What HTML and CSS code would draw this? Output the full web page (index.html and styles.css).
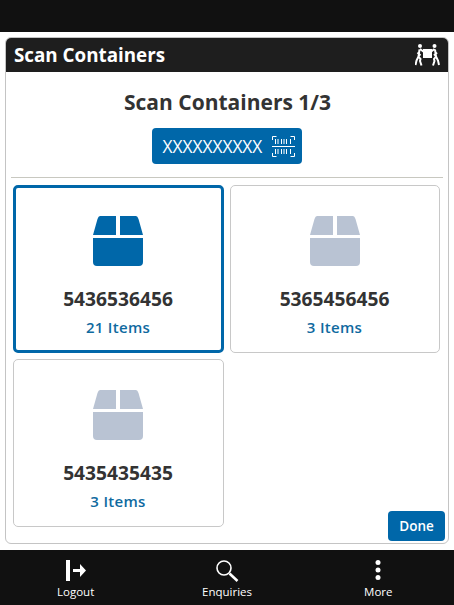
FILE: index.html
```html
<!DOCTYPE html>
<html lang="en">
<head>
  <meta charset="UTF-8">
  <meta name="viewport" content="width=device-width, initial-scale=1.0">
  <title>Scan Containers</title>
  <link rel="stylesheet" href="styles.css">
</head>
<body>
  <div class="status-bar"></div>
  <main class="panel">
    <header class="panel-header">
      <h1>Scan Containers</h1>
      <svg class="movers" width="25" height="22" viewBox="0 0 25 22" fill="#fff" stroke="#fff">
        <circle cx="5" cy="2" r="2" stroke="none"/>
        <circle cx="19.500" cy="2" r="2" stroke="none"/>
        <rect x="8" y="5" width="9" height="9" stroke="none"/>
        <path d="M5 5l4 3M4.500 5.500l-1 7 2 2.500-.5 2 1.500 4.500M3.500 12.500l-2 4-1 4.500M2.500 8.500l3 3" fill="none" stroke-width="2"/>
        <path d="M19.500 5l-4 3M20 5.500l1 7-2 2.500.5 2-1.500 4.500M21 12.500l2 4 1 4.500M22 8.500l-3 3" fill="none" stroke-width="2"/>
      </svg>
    </header>
    <div class="panel-body">
      <h2>Scan Containers 1/3</h2>
      <button class="scan-button" type="button">
        <span>XXXXXXXXXX</span>
        <svg width="23" height="23" viewBox="0 0 23 23" fill="none" stroke="#fff">
          <path d="M.5 5V1.500h4M18.500 1.500h4V5M.5 18v3.500h4M18.500 21.500h4V18"/>
          <path d="M0 11.500h23"/>
          <path d="M3.500 4v5M6 4v5M9.500 4v5M12 4v5M14.500 4v5M18.500 4v5M3.500 14v5M6 14v5M9.500 14v5M12 14v5M14.500 14v5M18.500 14v5"/>
        </svg>
      </button>
      <hr class="divider">
      <div class="tiles">
        <div class="tile selected">
          <svg class="box" width="50" height="50" viewBox="0 0 50 50"><path d="M7 0h16v19H0l4.500-16q1-3 2.500-3zM27 0h16q1.500 0 2.500 3L50 19H27zM0 22h50v24q0 4-4 4H4q-4 0-4-4z"/></svg>
          <div class="tile-number">5436536456</div>
          <div class="tile-items">21 Items</div>
        </div>
        <div class="tile">
          <svg class="box" width="50" height="50" viewBox="0 0 50 50"><path d="M7 0h16v19H0l4.500-16q1-3 2.500-3zM27 0h16q1.500 0 2.500 3L50 19H27zM0 22h50v24q0 4-4 4H4q-4 0-4-4z"/></svg>
          <div class="tile-number">5365456456</div>
          <div class="tile-items">3 Items</div>
        </div>
        <div class="tile">
          <svg class="box" width="50" height="50" viewBox="0 0 50 50"><path d="M7 0h16v19H0l4.500-16q1-3 2.500-3zM27 0h16q1.500 0 2.500 3L50 19H27zM0 22h50v24q0 4-4 4H4q-4 0-4-4z"/></svg>
          <div class="tile-number">5435435435</div>
          <div class="tile-items">3 Items</div>
        </div>
      </div>
      <div class="actions">
        <button class="done-button" type="button">Done</button>
      </div>
    </div>
  </main>
  <nav class="bottom-bar">
    <div class="nav-item">
      <svg width="24" height="22" viewBox="0 0 24 22" fill="#fff">
        <rect x="2" y="0" width="4" height="21"/>
        <path d="M9 9h7V4l6 6.500-6 6.500v-5H9z"/>
      </svg>
      <span>Logout</span>
    </div>
    <div class="nav-item">
      <svg width="24" height="22" viewBox="0 0 24 22" fill="none" stroke="#fff">
        <circle cx="9" cy="8" r="7" stroke-width="1.600"/>
        <path d="M14.500 13.500l8 7.500" stroke-width="2.600"/>
      </svg>
      <span>Enquiries</span>
    </div>
    <div class="nav-item">
      <svg width="24" height="22" viewBox="0 0 24 22" fill="#fff">
        <circle cx="12" cy="2.500" r="2.500"/>
        <circle cx="12" cy="10" r="2.500"/>
        <circle cx="12" cy="17.500" r="2.500"/>
      </svg>
      <span>More</span>
    </div>
  </nav>
</body>
</html>
```

FILE: styles.css
```css
* {
  box-sizing: border-box;
}

html, body {
  margin: 0;
  height: 605px;
  overflow: hidden;
}

body {
  display: flex;
  flex-direction: column;
  background-color: #fff;
  font-family: "Open Sans", "Noto Sans", sans-serif;
  color: #333;
}

.status-bar {
  height: 32px;
  flex: none;
  background-color: #111;
}

.panel {
  height: 507px;
  flex: none;
  margin: 5px 5px 6px 5px;
  border: 1px solid #c4c4c4;
  border-radius: 6px;
  overflow: hidden;
  display: flex;
  flex-direction: column;
}

.panel-header {
  height: 34px;
  flex: none;
  padding: 0 8px 0 8px;
  display: flex;
  align-items: center;
  justify-content: space-between;
  background-color: #1e1e1e;
}

.panel-header h1 {
  margin: 0;
  font-size: 18.8px;
  font-weight: 700;
  color: #fff;
}

.panel-body {
  flex: 1;
  padding: 0 4px 3px 7px;
  display: flex;
  flex-direction: column;
}

.panel-body h2 {
  margin: 17px 0 12px;
  height: 27px;
  line-height: 27px;
  font-size: 21px;
  font-weight: 700;
  text-align: center;
  padding-right: 2px;
}

.scan-button {
  align-self: center;
  width: 150px;
  height: 36px;
  margin-left: -4px;
  padding: 0 7px 0 11px;
  display: flex;
  align-items: center;
  justify-content: space-between;
  border: 0;
  border-radius: 4px;
  background-color: #0067a9;
  color: #fff;
  font-family: inherit;
  font-size: 17.3px;
}

.divider {
  width: 432px;
  margin: 13px 0 7px -2px;
  border: 0;
  border-top: 1px solid #c8c8c0;
}

.tiles {
  display: grid;
  grid-template-columns: 211px 210px;
  grid-auto-rows: 168px;
  gap: 6px;
}

.tile {
  padding-top: 30px;
  padding-right: 1px;
  display: flex;
  flex-direction: column;
  align-items: center;
  border: 1px solid #c8c8c8;
  border-radius: 5px;
}

.tile.selected {
  border: 3px solid #0067a9;
  padding-top: 28px;
}

.box {
  fill: #b9c3d3;
}

.selected .box {
  fill: #0067a9;
}

.tile-number {
  margin-top: 20px;
  font-size: 19.2px;
  font-weight: 700;
  line-height: 26px;
}

.tile-items {
  margin-top: 5px;
  font-size: 15px;
  font-weight: 600;
  line-height: 20px;
  letter-spacing: 0.3px;
  color: #0f6a9f;
}

.actions {
  position: absolute;
  top: 511px;
  left: 388px;
}

.done-button {
  width: 57px;
  height: 30px;
  padding: 0;
  border: 0;
  border-radius: 4px;
  background-color: #0067a9;
  color: #fff;
  font-family: inherit;
  font-size: 13.5px;
  font-weight: 600;
}

.bottom-bar {
  height: 55px;
  flex: none;
  padding: 10px 0 0;
  display: grid;
  grid-template-columns: repeat(3, 1fr);
  background-color: #111;
}

.nav-item {
  display: flex;
  flex-direction: column;
  align-items: center;
  gap: 2px;
  color: #fff;
  font-size: 11.5px;
  line-height: 16px;
}
```
